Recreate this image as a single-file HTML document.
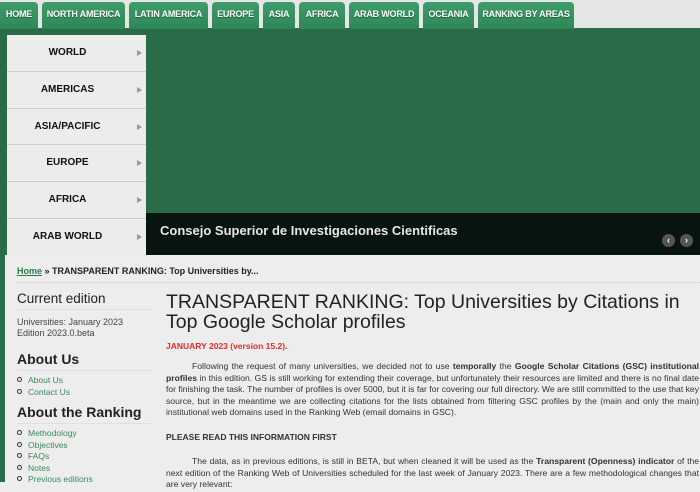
<!DOCTYPE html>
<html><head><meta charset="utf-8"><style>
*{margin:0;padding:0;box-sizing:border-box}
body{width:700px;height:482px;overflow:hidden;background:#ededed;font-family:"Liberation Sans",Arial,sans-serif;position:relative}
.bar{position:absolute;left:0;top:0;width:700px;height:29px;background:#e6e6e6}
.tab{position:absolute;top:2px;height:27px;background:linear-gradient(#3f9c6a,#2e8757);color:#fff;font-size:9px;font-weight:bold;line-height:25px;text-align:center;border-radius:4px 4px 0 0;text-shadow:0 1px 1px #1c5a38;letter-spacing:-0.2px}
.green{position:absolute;left:0;top:28px;width:700px;height:227px;background:#2a6b48}
.leftline{position:absolute;left:0;top:28px;width:5px;height:454px;background:#2a6b48}
.menu{position:absolute;left:7px;top:35px;width:139px}
.mi{height:36.8px;background:#ececec;border-bottom:1px solid #d0d0d0;font-size:10px;font-weight:bold;color:#111;line-height:36px;text-align:center;position:relative;padding-right:18px}
.mi:after{content:"";position:absolute;right:4px;top:15px;border-left:5px solid #999;border-top:3px solid transparent;border-bottom:3px solid transparent}
.cap{position:absolute;left:146px;top:213px;width:554px;height:42px;background:#08140e}
.cap span{position:absolute;left:14px;top:10px;color:#e6e6e6;font-size:13px;font-weight:bold}
.nb{position:absolute;top:234px;width:13px;height:13px;border-radius:50%;background:#555;color:#fff;font-size:9px;line-height:13px;text-align:center;font-weight:bold}
.bc{position:absolute;left:17px;top:266px;font-size:9px;font-weight:bold;color:#222;width:683px;border-bottom:1px dotted #ccc;padding-bottom:6px}
.bc a{color:#2a7a4e;text-decoration:underline}
.side{position:absolute;left:17px;top:291px;width:135px;color:#444}
.side h3{font-weight:normal;font-size:13.5px;color:#222;border-bottom:1px solid #e0e0e0;padding-bottom:3px;margin-bottom:7px}
.side h2{font-size:14px;color:#222;border-bottom:1px solid #e0e0e0;padding-bottom:3px;margin-bottom:4px}
.side p{font-size:9px;line-height:11px;margin-bottom:12px}
.side ul{list-style:none;font-size:8.5px;line-height:11.5px;margin-bottom:6px}
.side li{color:#3a8a5e}
.side li:before{content:"";display:inline-block;width:3px;height:3px;border:1px solid #333;border-radius:50%;margin-right:6px;vertical-align:1px}
.main{position:absolute;left:166px;top:292px;width:533px;color:#333}
.main h1{font-weight:normal;font-size:19.5px;line-height:20px;color:#222;margin-bottom:9px}
.red{color:#e52b2b;font-size:8.5px;font-weight:bold;margin-bottom:10px}
.main p{font-size:8.6px;line-height:11.6px;text-align:justify;text-indent:26px}
.main h4{font-size:8.5px;margin:13px 0 14px}
</style></head><body>
<div class="bar"></div>
<div class="green"></div>
<div class="leftline"></div>
<div class="tab" style="left:0;width:38px;border-radius:0 4px 0 0">HOME</div>
<div class="tab" style="left:42px;width:83px">NORTH AMERICA</div>
<div class="tab" style="left:129px;width:79px">LATIN AMERICA</div>
<div class="tab" style="left:212px;width:47px">EUROPE</div>
<div class="tab" style="left:263px;width:32px">ASIA</div>
<div class="tab" style="left:299px;width:46px">AFRICA</div>
<div class="tab" style="left:349px;width:70px">ARAB WORLD</div>
<div class="tab" style="left:423px;width:51px">OCEANIA</div>
<div class="tab" style="left:478px;width:96px">RANKING BY AREAS</div>
<div class="menu">
<div class="mi">WORLD</div><div class="mi">AMERICAS</div><div class="mi">ASIA/PACIFIC</div><div class="mi">EUROPE</div><div class="mi">AFRICA</div><div class="mi" style="border-bottom:none">ARAB WORLD</div>
</div>
<div class="cap"><span>Consejo Superior de Investigaciones Cientificas</span></div>
<div class="nb" style="left:662px">‹</div><div class="nb" style="left:680px">›</div>
<div class="bc"><a>Home</a> » TRANSPARENT RANKING: Top Universities by...</div>
<div class="side">
<h3>Current edition</h3>
<p>Universities: January 2023<br>Edition 2023.0.beta</p>
<h2>About Us</h2>
<ul><li>About Us</li><li>Contact Us</li></ul>
<h2>About the Ranking</h2>
<ul><li>Methodology</li><li>Objectives</li><li>FAQs</li><li>Notes</li><li>Previous editions</li></ul>
</div>
<div class="main">
<h1>TRANSPARENT RANKING: Top Universities by Citations in Top Google Scholar profiles</h1>
<div class="red">JANUARY 2023 (version 15.2).</div>
<p>Following the request of many universities, we decided not to use <b>temporally</b> the <b>Google Scholar Citations (GSC) institutional profiles</b> in this edition. GS is still working for extending their coverage, but unfortunately their resources are limited and there is no final date for finishing the task. The number of profiles is over 5000, but it is far for covering our full directory. We are still committed to the use that key source, but in the meantime we are collecting citations for the lists obtained from filtering GSC profiles by the (main and only the main) institutional web domains used in the Ranking Web (email domains in GSC).</p>
<h4>PLEASE READ THIS INFORMATION FIRST</h4>
<p>The data, as in previous editions, is still in BETA, but when cleaned it will be used as the <b>Transparent (Openness) indicator</b> of the next edition of the Ranking Web of Universities scheduled for the last week of January 2023. There are a few methodological changes that are very relevant:</p>
</div>
</body></html>
